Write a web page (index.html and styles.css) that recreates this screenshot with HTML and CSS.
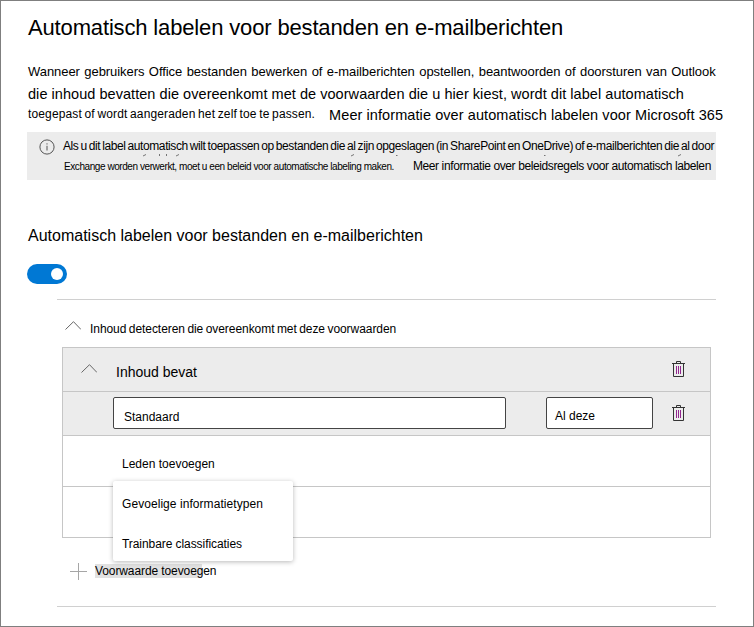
FILE: index.html
```html
<!DOCTYPE html>
<html lang="nl">
<head>
<meta charset="utf-8">
<title>Automatisch labelen</title>
<link rel="stylesheet" href="styles.css">
</head>
<body>
<main class="page">
  <h1 class="title">Automatisch labelen voor bestanden en e-mailberichten</h1>
  <div class="intro">
    <p class="intro-a">Wanneer gebruikers Office bestanden bewerken of e-mailberichten opstellen, beantwoorden of doorsturen van Outlook</p>
    <p class="intro-b">die inhoud bevatten die overeenkomt met de voorwaarden die u hier kiest, wordt dit label automatisch</p>
    <p class="intro-c"><span class="small">toegepast of wordt aangeraden het zelf toe te passen.</span><a class="more">Meer informatie over automatisch labelen voor Microsoft 365</a></p>
  </div>
  <section class="banner">
    <svg class="info" viewBox="0 0 16 16"><circle cx="8" cy="8" r="7.1"/><path d="M8 6.800v4.700M8 4.300v1.200"/></svg>
    <div class="banner-text">
      <p class="banner-a">Als u dit label automatisch wilt toepassen op bestanden die al zijn opgeslagen (in SharePoint en OneDrive) of e-mailberichten die al door</p>
      <p class="banner-b"><span class="small">Exchange worden verwerkt, moet u een beleid voor automatische labeling maken.</span><a class="more">Meer informatie over beleidsregels voor automatisch labelen</a></p>
    </div>
    <svg class="ticks" viewBox="0 0 689 4"><path d="M116 3l3-1.500M132.500 1v2M139.500 1v2M149 3l3-1.500M324 3l3-1.500M369 2.500h1.500M517 2.500h1.500M651 3l3-1.500"/></svg>
  </section>
  <h2 class="subtitle">Automatisch labelen voor bestanden en e-mailberichten</h2>
  <div class="toggle"><span class="knob"></span></div>
  <section class="conditions">
    <div class="group-head">
      <svg class="chevron" viewBox="0 0 16 9"><path d="M.5 8.500 8.500.7l7.500 7.800"/></svg>
      <span class="detect">Inhoud detecteren die overeenkomt met deze voorwaarden</span>
    </div>
    <div class="box">
      <div class="row shaded head">
        <svg class="chevron" viewBox="0 0 16 9"><path d="M.5 8.500 8.500.7l7.500 7.800"/></svg>
        <span class="contains">Inhoud bevat</span>
        <svg class="trash" viewBox="0 0 13 17"><path class="can" d="M0 2.500h13M4.500 2V.5h4V2M1.500 3v12.500h10V3"/><path class="bars" d="M4.500 5v8M6.500 5v8M8.500 5v8"/></svg>
      </div>
      <div class="row shaded fields">
        <div class="field name">Standaard</div>
        <div class="field match">Al deze</div>
        <svg class="trash" viewBox="0 0 13 17"><path class="can" d="M0 2.500h13M4.500 2V.5h4V2M1.500 3v12.500h10V3"/><path class="bars" d="M4.500 5v8M6.500 5v8M8.500 5v8"/></svg>
      </div>
      <div class="row add">
        <span class="members">Leden toevoegen</span>
        <div class="menu">
          <div class="item types">Gevoelige informatietypen</div>
          <div class="item class">Trainbare classificaties</div>
        </div>
      </div>
      <div class="row blank"></div>
    </div>
    <div class="add-condition">
      <svg class="plus" viewBox="0 0 17 17"><path d="M0 8.500h17M8.500 0v17"/></svg>
      <span class="addc">Voorwaarde toevoegen</span>
    </div>
  </section>
</main>
</body>
</html>
```
FILE: styles.css
```css
* { box-sizing: border-box; margin: 0; padding: 0; }
body { background: #fff; color: #000; font: 12px "Liberation Sans", Arial, sans-serif; }
.page { width: 754px; height: 627px; border: 1px solid #7f7f7f; padding: 0 0 0 26px; overflow: hidden; white-space: nowrap; }
svg { display: block; flex: none; fill: none; }

.title { padding: 13px 0 0 1px; height: 58px; font-size: 22px; font-weight: 400; line-height: 28px; letter-spacing: -.15px; }
.intro { padding-left: 1px; height: 73px; }
.intro-a { font-size: 13px; line-height: 26px; height: 24px; letter-spacing: -.06px; word-spacing: .9px; }
.intro-b { font-size: 14.500px; line-height: 22px; height: 22px; letter-spacing: .047px; }
.intro-c { display: flex; gap: 14px; line-height: 20px; height: 20px; }
.intro-c .small { font-size: 12px; line-height: 18px; letter-spacing: .14px; word-spacing: -.9px; }
.intro-c .more { font-size: 14.500px; letter-spacing: .08px; }

.banner { position: relative; display: flex; width: 689px; height: 48px; background: #ececec; padding: 7px 0 0 12px; gap: 8px; }
.info { width: 16px; height: 16px; stroke: #555; }
.banner-a { font-size: 12px; line-height: 14px; height: 20px; letter-spacing: -.4px; word-spacing: -.95px; }
.banner-b { display: flex; align-items: baseline; line-height: 14px; gap: 19px; padding-left: 1px; }
.banner-b .small { font-size: 10px; letter-spacing: -.43px; }
.banner-b .more { font-size: 12px; letter-spacing: -.386px; }
.ticks { position: absolute; left: 0; top: 21px; width: 689px; height: 4px; stroke: #555; stroke-width: .8; }

.subtitle { padding: 46px 0 0 1px; height: 84px; font-size: 16px; font-weight: 400; line-height: 20px; }
.toggle { display: flex; justify-content: flex-end; align-items: center; width: 40px; height: 20px; padding-right: 4px; border-radius: 10px; background: #0078d4; }
.knob { width: 12px; height: 12px; border-radius: 50%; background: #fff; }

.conditions { width: 659px; height: 308px; margin: 15px 0 0 30px; border-top: 1px solid #d0d0d0; border-bottom: 1px solid #d0d0d0; }
.chevron { width: 16px; height: 9px; stroke: #666; }
.group-head { display: flex; align-items: center; height: 47px; padding: 10px 0 0 8px; gap: 9px; }
.group-head .chevron { margin-bottom: 6px; }
.detect { letter-spacing: -.06px; word-spacing: -.8px; }
.box { width: 649px; height: 191px; margin-left: 5px; border: 1px solid #c6c6c6; }
.row { display: flex; align-items: center; border-bottom: 1px solid #c6c6c6; }
.shaded { height: 44px; background: #ececec; }
.head { padding: 0 25px 0 18px; }
.head .chevron { margin-bottom: 2px; }
.contains { font-size: 14px; margin-left: 19px; padding-top: 4px; }
.trash { width: 13px; height: 17px; margin-left: auto; }
.can { stroke: #333; }
.bars { stroke: #92278f; }
.fields { padding: 0 25px 0 50px; }
.field { height: 32px; margin-bottom: 1px; border: 1px solid #444; border-radius: 2px; background: #fff; padding: 9px 0 0 10px; line-height: 20px; }
.name { width: 393px; }
.match { width: 107px; margin-left: 40px; padding: 8px 0 0 8px; }
.add { position: relative; height: 51px; padding: 6px 0 0 59px; }
.menu { position: absolute; left: 50px; top: 45px; width: 180px; height: 80px; padding: 3px 0 0 9px; background: #fff; border-radius: 2px; box-shadow: 0 1px 5px rgba(0,0,0,.28); }
.item { height: 40px; line-height: 40px; }
.types { letter-spacing: .06px; }
.class { letter-spacing: -.07px; }
.blank { border: 0; }
.add-condition { display: flex; align-items: center; height: 66px; padding-left: 13px; gap: 8px; }
.plus { width: 17px; height: 17px; stroke: #a6a6a6; }
.addc { letter-spacing: -.1px; background: linear-gradient(#e1e1e1, #e1e1e1) no-repeat 0 0 / 107px 100%; }
```
